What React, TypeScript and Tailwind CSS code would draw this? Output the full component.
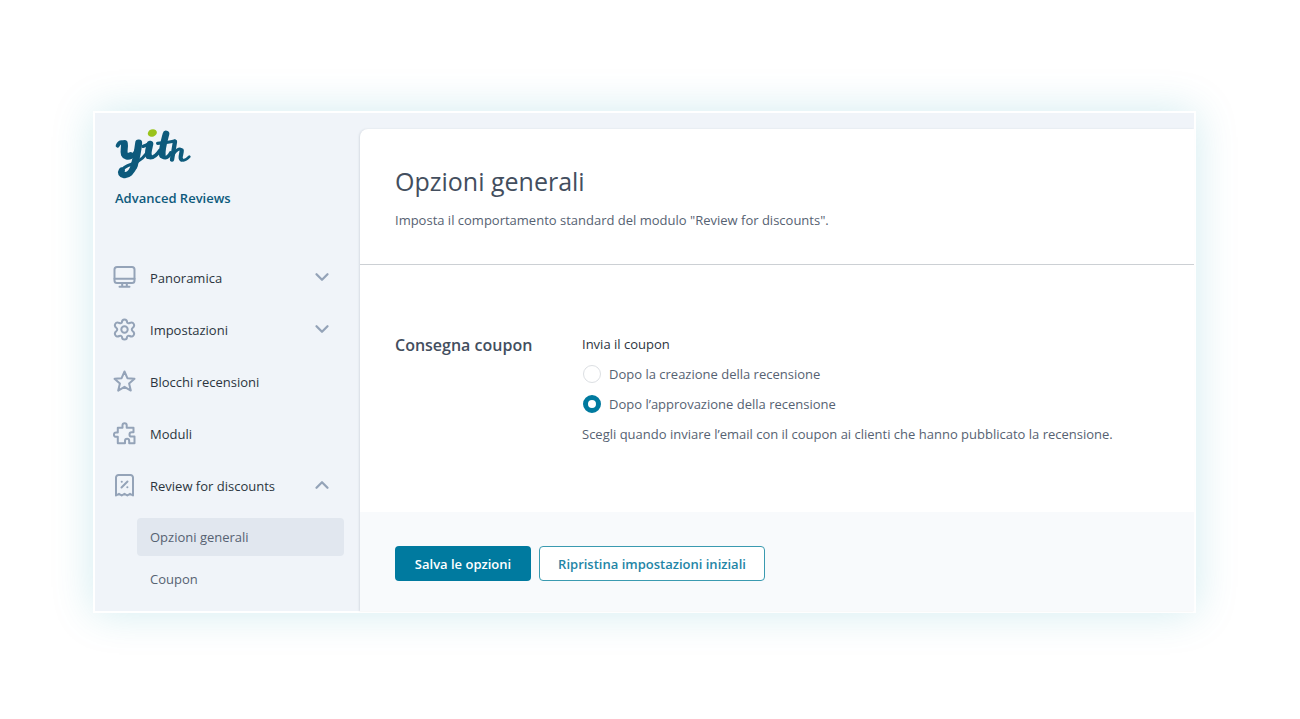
import React from 'react';
import { ChevronDown, ChevronUp } from 'lucide-react';

const Logo: React.FC = () => (
  <svg viewBox="0 0 252 174" className="w-[84px] h-[58px] -ml-[3px]" fill="none" stroke="#0d5a7c" strokeLinecap="round" strokeLinejoin="round" role="img" aria-label="yith">
    <ellipse cx="121" cy="24" rx="14" ry="11" transform="rotate(-20 121 24)" fill="#9ac31c" stroke="none" />
    {/* y */}
    <path d="M17 62C20 54 27 50 36 53" strokeWidth="12" />
    <path d="M37 56C39 66 34 78 37 87C40 94 48 96 55 92" strokeWidth="21" />
    <path d="M52 97C64 92 74 78 80 58" strokeWidth="10" />
    <path d="M80 54C78 78 72 104 66 124" strokeWidth="21" />
    <path d="M67 120C60 142 48 152 36 150C28 149 25 143 29 137" strokeWidth="19" />
    <path d="M28 138C38 118 62 120 78 109C88 103 96 96 103 86" strokeWidth="9" />
    {/* i */}
    <path d="M93 64C100 62 107 59 112 55" strokeWidth="10" />
    <path d="M114 57C112 68 106 82 110 92" strokeWidth="20" />
    <path d="M110 97C124 102 136 88 144 76" strokeWidth="11" />
    {/* t */}
    <path d="M162 27C157 46 149 72 151 90" strokeWidth="20" />
    <path d="M151 95C162 102 170 96 176 84" strokeWidth="11" />
    <path d="M137 55C152 53 170 53 187 48" strokeWidth="10" />
    {/* h */}
    <path d="M189 50L180 104" strokeWidth="13" />
    <path d="M182 91C190 76 204 66 209 76" strokeWidth="9" />
    <path d="M209 76C210 86 202 98 208 103" strokeWidth="13" />
    <path d="M208 104C216 109 224 104 232 95" strokeWidth="8" />
  </svg>
);

const icons: Record<string, React.ReactNode> = {
  monitor: (
    <>
      <rect x="1.500" y="1" width="20" height="16" rx="2.500" />
      <path d="M1.500 12.800h20M9.200 17.500v2.500M13.800 17.500v2.500M6.500 20.800h10" />
    </>
  ),
  gear: (
    <>
      <path d="M9 4C9 2 10 1.500 11.500 1.500S14 2 14 4C14.300 5.200 15.400 5.600 16.600 5C18.600 4 19.900 4.300 20.700 5.900S21.200 8.900 19.600 9.900C18.500 10.800 18.500 12.200 19.600 13.100C21.200 14.100 21.500 15.500 20.700 17.100S18.600 19 16.600 18C15.400 17.400 14.300 17.800 14 19C14 21 13 21.500 11.500 21.500S9 21 9 19C8.700 17.800 7.600 17.400 6.400 18C4.400 19 3.100 18.700 2.300 17.100S1.800 14.100 3.400 13.100C4.500 12.200 4.500 10.800 3.400 9.900C1.800 8.900 1.500 7.500 2.300 5.900S4.400 4 6.400 5C7.600 5.600 8.700 5.200 9 4z" />
      <circle cx="11.500" cy="11.500" r="3.200" />
    </>
  ),
  star: <path d="M11.500 1.500l2.900 6.700 7.100.6-5.400 4.700 1.700 7.100-6.300-3.800-6.300 3.800 1.700-7.100L1.500 8.800l7.100-.6z" />,
  puzzle: (
    <path d="M4.800 5.800h4.700V3.300a2.100 2.100 0 0 1 4.200 0v2.500h6.800v4.400h-1.800a2.200 2.200 0 0 0 0 4.400h2.800v6.700h-5.300v-2.400a2.100 2.100 0 0 0-4.200 0v2.400H4.800v-6.500H3a2.100 2.100 0 0 1 0-4.200h1.800z" />
  ),
  receipt: (
    <>
      <path d="M3 21.500V3.500a2.500 2.500 0 0 1 2.500-2.500h12a2.500 2.500 0 0 1 2.500 2.500v18l-3-1.700-2.700 1.700-2.800-1.700-2.800 1.700L6 19.800z" />
      <path d="M8.500 13.500l6-6M8.700 7.800h.1M14.300 13.200h.1" />
    </>
  ),
};

const MENU = [
  { icon: 'monitor', label: 'Panoramica', arrow: 'down' },
  { icon: 'gear', label: 'Impostazioni', arrow: 'down' },
  { icon: 'star', label: 'Blocchi recensioni' },
  { icon: 'puzzle', label: 'Moduli' },
  { icon: 'receipt', label: 'Review for discounts', arrow: 'up' },
];

const OPTIONS = ['Dopo la creazione della recensione', 'Dopo l’approvazione della recensione'];

const Sidebar: React.FC = () => (
  <aside className="w-[265px] shrink-0 pt-3 pl-5">
    <Logo />
    <div className="mt-[5px] text-[13px] leading-5 font-semibold text-[#0d5a7c]">Advanced Reviews</div>
    <nav className="mt-[43px] -ml-0.5">
      {MENU.map((item) => (
        <a key={item.label} href="#" className="flex items-center h-[52px] pr-[27px] text-[13px] text-[#2b3440]">
          <svg viewBox="0 0 23 23" className="w-[23px] h-[23px] mr-[14px]" fill="none" stroke="#94a3b8" strokeWidth="2" strokeLinecap="round" strokeLinejoin="round">
            {icons[item.icon]}
          </svg>
          <span className="flex-1 pt-1">{item.label}</span>
          {item.arrow === 'down' && <ChevronDown className="w-[22px] h-[22px] text-[#94a3b8]" strokeWidth={2.5} />}
          {item.arrow === 'up' && <ChevronUp className="w-[22px] h-[22px] text-[#94a3b8]" strokeWidth={2.5} />}
        </a>
      ))}
      <div className="ml-6 mr-4 mt-[7px] text-[13px] text-[#566272]">
        <a href="#" className="flex items-center h-[38px] px-[13px] pt-0.5 rounded bg-[#e1e7ef]">Opzioni generali</a>
        <a href="#" className="flex items-center h-[38px] px-[13px] pt-0.5 mt-1">Coupon</a>
      </div>
    </nav>
  </aside>
);

const App: React.FC = () => {
  return (
    <div className="min-h-screen bg-white pt-[111px] pl-[93px] pr-[104px] pb-[106px] font-['Open_Sans',sans-serif]">
      <div className="flex border-2 border-white bg-[#f0f4f9] min-h-[502px] shadow-[0_0_40px_rgba(0,150,170,0.18)]">
        <Sidebar />
        <main className="flex-1 flex flex-col mt-4 rounded-tl-lg bg-white overflow-hidden shadow-[-1px_0_2px_rgba(71,85,105,0.14)]">
          <header className="h-[136px] px-[35px] pt-[34px] border-b border-[#ccd0d4]">
            <h1 className="text-[25px] leading-9 text-[#434e5e]">Opzioni generali</h1>
            <p className="mt-[9px] text-[13px] leading-6 text-[#566272]">Imposta il comportamento standard del modulo "Review for discounts".</p>
          </header>
          <form className="flex-1 flex flex-col">
            <div className="flex-1 flex px-[35px] pt-16">
              <h2 className="w-[187px] text-base leading-8 font-semibold text-[#434e5e]">Consegna coupon</h2>
              <fieldset className="text-[13px] text-[#566272]">
                <legend className="leading-[30px] text-[#2b3440]">Invia il coupon</legend>
                {OPTIONS.map((option, i) => (
                  <label key={option} className="flex items-center h-[30px] pl-px">
                    <input type="radio" name="delivery" defaultChecked={i === 1} className="appearance-none w-[18px] h-[18px] mr-2 rounded-full bg-white border border-[#dcdfe3] checked:border-[5px] checked:border-[#007a9f]" />
                    <span className="pt-0.5">{option}</span>
                  </label>
                ))}
                <p className="leading-[30px]">Scegli quando inviare l’email con il coupon ai clienti che hanno pubblicato la recensione.</p>
              </fieldset>
            </div>
            <div className="flex gap-2 h-[99px] px-[35px] pt-[34px] bg-[#f8fafc] text-[13px] font-semibold">
              <button type="submit" className="h-[35px] w-[136px] pt-0.5 rounded bg-[#007a9f] text-white">Salva le opzioni</button>
              <button type="reset" className="h-[35px] w-[226px] pt-0.5 rounded border border-[#3a9ab0] bg-white text-[#2385a6]">Ripristina impostazioni iniziali</button>
            </div>
          </form>
        </main>
      </div>
    </div>
  );
};

export default App;
